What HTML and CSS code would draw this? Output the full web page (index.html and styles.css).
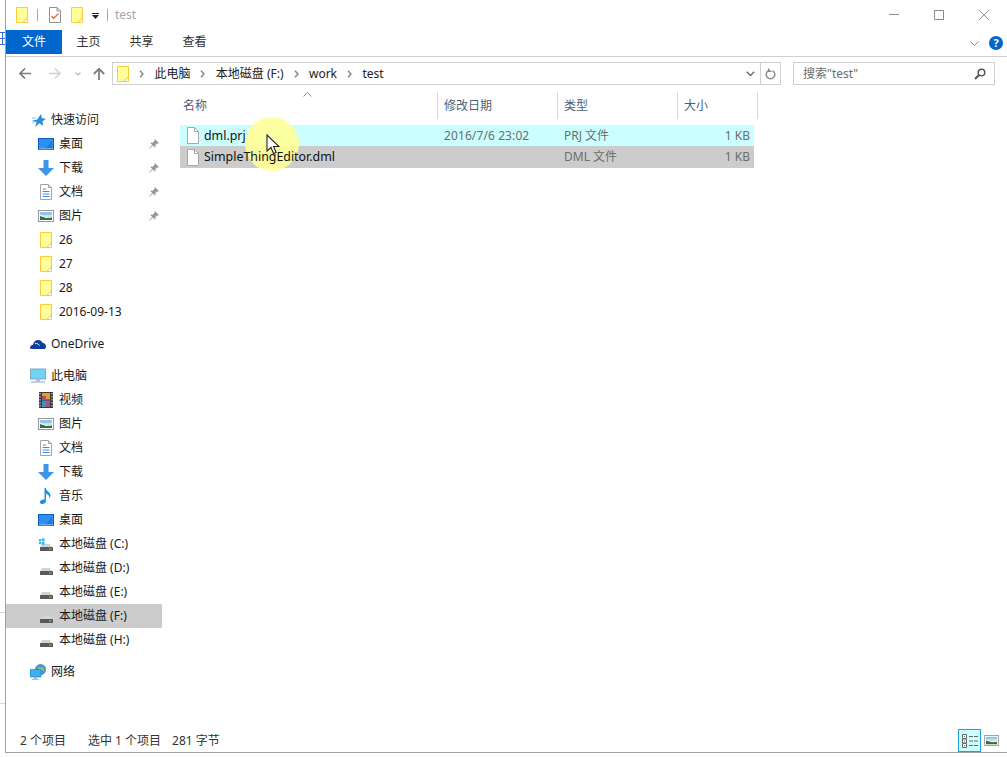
FILE: index.html
```html
<!DOCTYPE html>
<html lang="zh-CN">
<head>
<meta charset="utf-8">
<title>test</title>
<link rel="stylesheet" href="styles.css">
</head>
<body>
<svg class="defs" width="0" height="0" aria-hidden="true">
  <symbol id="note" viewBox="0 0 12 16"><path d="M.5.5h11v11l-4 4h-7z" fill="#ffff99"/><path d="M11.5 10v1.5l-4 4H6z" fill="#fbc77a"/><path d="M.5.5h11v15H.5z" fill="none" stroke="#ffc83d"/></symbol>
  <symbol id="file" viewBox="0 0 14 17"><path d="M1.5.5h7l4 4v12h-11z" fill="#fff" stroke="#a8a8a8"/><path d="M8.5.5v4h4" fill="none" stroke="#a8a8a8"/></symbol>
  <symbol id="desktop" viewBox="0 0 16 12"><rect width="16" height="12" fill="#0b5fc4"/><rect x="1" y="1" width="14" height="9" fill="#2f8ff0"/><path d="M8 10l6-7v7z" fill="#1f78dd"/><rect x="1" y="10.500" width="14" height=".7" fill="#dff"/></symbol>
  <symbol id="down" viewBox="0 0 16 16"><path d="M5.500 0h5v8H16l-8 8-8-8h5.500z" fill="#3d95e6"/></symbol>
  <symbol id="doc" viewBox="0 0 12 16"><path d="M.5.5h8l3 3v12H.5z" fill="#fff" stroke="#a3a3a3"/><path d="M3 5h3M2.500 7.500h7M2.500 10h7M2.500 12.500h7" stroke="#3f8fd8"/><path d="M8.500.5v3h3" fill="#ddd" stroke="#a3a3a3"/></symbol>
  <symbol id="pic" viewBox="0 0 16 12"><rect x=".5" y=".5" width="15" height="11" fill="#fff" stroke="#9a9a9a"/><rect x="2" y="2" width="12" height="3" fill="#8fc7ee"/><path d="M2 5h12v2l-7 0z" fill="#cfe7c9"/><path d="M2 6l6 2 6-.5V10H2z" fill="#3b6a4a"/></symbol>
  <symbol id="pin" viewBox="0 0 10 10"><path d="M6 0l4 4-1 .6-.7-.2L6.300 6.300 6.500 8 5.700 8.500 3.800 6.600.6 9.800 0 9.400 3.200 6 1.400 4.200 2 3.500l1.700.2L5.600 1.700 5.400 1z" fill="#9a9a9a"/></symbol>
  <symbol id="star" viewBox="0 0 14 13"><path d="M9 0l.8 4L14 5l-3.500 2.300.5 4.700-3.500-2.800L3 13l1.700-4.800L0 6.500l5-.8z" fill="#2c8fde"/><path d="M0 4h4M0 8h3" stroke="#7cc4f2"/></symbol>
  <symbol id="cloud" viewBox="0 0 16 10"><path d="M0 9.200C0 7 1.500 5.800 3 5.800 3.600 3 5.800 1 8.300 1c2 0 3.400 1 4.200 2.700C14.700 4 16 5.800 16 7.500c0 1-.4 1.700-1 2.500H1z" fill="#0f3f9c"/><path d="M5 4.700c2-.5 3.600.3 4.500 1.800" stroke="#fff" fill="none"/></symbol>
  <symbol id="pc" viewBox="0 0 16 15"><rect x=".5" y=".5" width="15" height="10" fill="#6fd3f6" stroke="#7ea8c4"/><path d="M6 11h4v2H6z" fill="#a9b6d2"/><path d="M1 13.500h14" stroke="#b0bbd6" stroke-width="1.400"/></symbol>
  <symbol id="film" viewBox="0 0 14 16"><rect width="14" height="16" fill="#3a3a3a"/><path d="M1 1v14M13 1v14" stroke="#ddd" stroke-dasharray="1.500 1.500"/><rect x="3" y="1" width="8" height="6.500" fill="#e0a030"/><rect x="3" y="8.500" width="8" height="6.500" fill="#3f8fc8"/><path d="M3 4h4v3.500H3zM7 10h4v5H7z" fill="#b04a7a"/></symbol>
  <symbol id="music" viewBox="0 0 12 16"><path d="M4.500 0h1.300c.3 3 4.200 3.800 4.700 7 .2 1.400-.4 2.500-1 3.200.2-2.300-1.500-3.800-3.500-4.400V13c0 2-2 3-3.700 3C.9 16 0 15.200 0 14.200 0 12.800 1.700 11.600 3.300 11.600c.5 0 .9.100 1.200.2z" fill="#1e8fe0"/></symbol>
  <symbol id="drive" viewBox="0 0 14 16"><path d="M3 8h8l2 3H1z" fill="#d4d4d4"/><rect x="1" y="11" width="13" height="4" rx=".5" fill="#5a5a5a"/><rect x="10" y="12.500" width="2.500" height="1" fill="#5fe07a"/></symbol>
  <symbol id="drive-sys" viewBox="0 0 14 16"><path d="M3 8h8l2 3H1z" fill="#d4d4d4"/><rect x="1" y="11" width="13" height="4" rx=".5" fill="#5a5a5a"/><rect x="10" y="12.500" width="2.500" height="1" fill="#5fe07a"/><path d="M0 3h2.300v2.300H0zM3 2.600h2.500v2.700H3zM0 6h2.300v2.300H0zM3 6h2.500v2.700H3z" fill="#2fb4f0"/></symbol>
  <symbol id="net" viewBox="0 0 16 16"><circle cx="10.500" cy="5.500" r="5.500" fill="#4d93c8"/><path d="M7 2c2 1 3 3 6 1l1 4c-2 0-3-1-4 2z" fill="#8cc88c"/><rect y="5.500" width="11" height="7.500" fill="#3fb0ee" stroke="#1d7dc2" stroke-width=".6"/><path d="M4 13h3v2H4z" fill="#a9b6d2"/><path d="M2 15.500h7" stroke="#b0bbd6"/></symbol>
  <symbol id="crumb" viewBox="0 0 5 8"><path d="M1 .8L4 4 1 7.200" fill="none" stroke="#8a8a8a" stroke-width="1.600"/></symbol>
</svg>

<div class="desktop-edge" aria-hidden="true">
  <svg class="edge-glyph" viewBox="0 0 5 13"><path d="M0 .5h5M0 6.500h5M0 12.500h5M2.500 0v13" stroke="#3a6fd0" fill="none"/></svg>
  <span class="edge-line edge-line-a"></span>
  <span class="edge-line edge-line-b"></span>
</div>

<div class="window">
  <header class="titlebar">
    <svg class="i-note"><use href="#note"/></svg>
    <span class="qa-sep"></span>
    <svg class="qa-check" viewBox="0 0 12 16"><path d="M.5.500h7.500l3.500 3.500v11.500H.5z" fill="#fff" stroke="#8f8f8f"/><path d="M8 .5V4h3.500" fill="none" stroke="#8f8f8f"/><path d="M2.500 9l2.200 2.300L9.500 6.500" fill="none" stroke="#e8662a" stroke-width="1.300"/></svg>
    <svg class="i-note qa-note2"><use href="#note"/></svg>
    <svg class="qa-drop" viewBox="0 0 7 6"><path d="M0 0h7v1H0zM0 2h7L3.500 6z" fill="#222"/></svg>
    <span class="qa-sep qa-sep2"></span>
    <span class="title-text">test</span>
    <div class="win-controls">
      <svg class="win-btn" viewBox="0 0 10 10"><path d="M0 4.500h10" stroke="#8a8a8a"/></svg>
      <svg class="win-btn" viewBox="0 0 10 10"><path d="M.5.500h9v9h-9z" fill="none" stroke="#8a8a8a"/></svg>
      <svg class="win-btn" viewBox="0 0 10 10"><path d="M0 0l10 10M10 0L0 10" stroke="#8a8a8a" stroke-width=".9"/></svg>
    </div>
  </header>

  <nav class="ribbon">
    <span class="tab tab-file">文件</span>
    <span class="tab">主页</span>
    <span class="tab">共享</span>
    <span class="tab">查看</span>
    <svg class="ribbon-chev" viewBox="0 0 9 5"><path d="M.5.500L4.500 4.500 8.500.5" fill="none" stroke="#8a8a8a"/></svg>
    <span class="help">?</span>
  </nav>

  <div class="addressrow">
    <svg class="nav nav-back" viewBox="0 0 12 11"><path d="M6 .5L1 5.500l5 5M1 5.500h11" fill="none" stroke="#7d7d7d" stroke-width="1.700"/></svg>
    <svg class="nav nav-fwd" viewBox="0 0 12 11"><path d="M6 .5l5 5-5 5M11 5.500H0" fill="none" stroke="#cfcfcf" stroke-width="1.300"/></svg>
    <svg class="nav nav-drop" viewBox="0 0 6 4"><path d="M.5.500L3 3 5.500.5" fill="none" stroke="#b5b5b5" stroke-width="1.200"/></svg>
    <svg class="nav nav-up" viewBox="0 0 12 12"><path d="M.8 6L6 .8 11.200 6M6 1v11" fill="none" stroke="#7d7d7d" stroke-width="1.800"/></svg>
    <div class="addressbar">
      <svg class="i-note addr-note"><use href="#note"/></svg>
      <svg class="crumb"><use href="#crumb"/></svg><span class="crumb-text">此电脑</span>
      <svg class="crumb"><use href="#crumb"/></svg><span class="crumb-text">本地磁盘 (F:)</span>
      <svg class="crumb"><use href="#crumb"/></svg><span class="crumb-text">work</span>
      <svg class="crumb"><use href="#crumb"/></svg><span class="crumb-text">test</span>
      <svg class="addr-drop" viewBox="0 0 9 6"><path d="M.8.800L4.500 4.500 8.200.8" fill="none" stroke="#6e6e6e" stroke-width="1.500"/></svg>
      <span class="addr-refresh">
        <svg viewBox="0 0 11 12"><path d="M7.500 2.600a4.300 4.300 0 1 1-4 0" fill="none" stroke="#8a8a8a" stroke-width="1.500"/><path d="M3 0v4h4z" fill="#8a8a8a"/></svg>
      </span>
    </div>
    <div class="searchbox">
      <span>搜索"test"</span>
      <svg viewBox="0 0 12 12"><circle cx="7.500" cy="4.500" r="3.300" fill="none" stroke="#555" stroke-width="1.500"/><path d="M5 7L1 11" stroke="#555" stroke-width="2"/></svg>
    </div>
  </div>

  <div class="body">
    <aside class="sidebar">
      <div class="group">
        <div class="row top"><svg class="ic ic-star"><use href="#star"/></svg><span>快速访问</span></div>
        <div class="row sub"><svg class="ic"><use href="#desktop"/></svg><span>桌面</span><svg class="pin"><use href="#pin"/></svg></div>
        <div class="row sub"><svg class="ic"><use href="#down"/></svg><span>下载</span><svg class="pin"><use href="#pin"/></svg></div>
        <div class="row sub"><svg class="ic"><use href="#doc"/></svg><span>文档</span><svg class="pin"><use href="#pin"/></svg></div>
        <div class="row sub"><svg class="ic"><use href="#pic"/></svg><span>图片</span><svg class="pin"><use href="#pin"/></svg></div>
        <div class="row sub"><svg class="ic"><use href="#note"/></svg><span>26</span></div>
        <div class="row sub"><svg class="ic"><use href="#note"/></svg><span>27</span></div>
        <div class="row sub"><svg class="ic"><use href="#note"/></svg><span>28</span></div>
        <div class="row sub"><svg class="ic"><use href="#note"/></svg><span>2016-09-13</span></div>
      </div>
      <div class="group">
        <div class="row top"><svg class="ic"><use href="#cloud"/></svg><span>OneDrive</span></div>
      </div>
      <div class="group">
        <div class="row top"><svg class="ic"><use href="#pc"/></svg><span>此电脑</span></div>
        <div class="row sub"><svg class="ic"><use href="#film"/></svg><span>视频</span></div>
        <div class="row sub"><svg class="ic"><use href="#pic"/></svg><span>图片</span></div>
        <div class="row sub"><svg class="ic"><use href="#doc"/></svg><span>文档</span></div>
        <div class="row sub"><svg class="ic"><use href="#down"/></svg><span>下载</span></div>
        <div class="row sub"><svg class="ic"><use href="#music"/></svg><span>音乐</span></div>
        <div class="row sub"><svg class="ic"><use href="#desktop"/></svg><span>桌面</span></div>
        <div class="row sub"><svg class="ic"><use href="#drive-sys"/></svg><span>本地磁盘 (C:)</span></div>
        <div class="row sub"><svg class="ic"><use href="#drive"/></svg><span>本地磁盘 (D:)</span></div>
        <div class="row sub"><svg class="ic"><use href="#drive"/></svg><span>本地磁盘 (E:)</span></div>
        <div class="row sub selected"><svg class="ic"><use href="#drive"/></svg><span>本地磁盘 (F:)</span></div>
        <div class="row sub"><svg class="ic"><use href="#drive"/></svg><span>本地磁盘 (H:)</span></div>
      </div>
      <div class="group">
        <div class="row top"><svg class="ic"><use href="#net"/></svg><span>网络</span></div>
      </div>
    </aside>

    <main class="files">
      <div class="head">
        <span class="col col-name">名称<svg class="sort" viewBox="0 0 9 5"><path d="M.5 4.500L4.500.5l4 4" fill="none" stroke="#8a8a8a"/></svg></span>
        <span class="col col-date">修改日期</span>
        <span class="col col-type">类型</span>
        <span class="col col-size">大小</span>
      </div>
      <div class="file file-hover">
        <span class="cell-name"><svg class="i-file"><use href="#file"/></svg><span class="file-label">dml.prj</span></span>
        <span class="cell cell-date">2016/7/6 23:02</span>
        <span class="cell cell-type">PRJ 文件</span>
        <span class="cell cell-size">1 KB</span>
      </div>
      <div class="file file-selected">
        <span class="cell-name"><svg class="i-file"><use href="#file"/></svg><span class="file-label">SimpleThingEditor.dml</span></span>
        <span class="cell cell-date"></span>
        <span class="cell cell-type">DML 文件</span>
        <span class="cell cell-size">1 KB</span>
      </div>
    </main>
  </div>

  <footer class="status">
    <span class="st-count">2 个项目</span>
    <span class="st-sel">选中 1 个项目</span>
    <span class="st-bytes">281 字节</span>
    <span class="view view-on">
      <svg viewBox="0 0 16 14"><path d="M.5.500h4v4h-4zM.5 5h4v4h-4zM.5 9.500h4v4h-4z" fill="#fff" stroke="#666"/><path d="M2 2h1v1H2zM2 6.500h1v1H2zM2 11h1v1H2z" fill="#666"/><path d="M7 2.500h4M12 2.500h4M7 7h4M12 7h4M7 11.500h4M12 11.500h4" stroke="#5f6b6b"/></svg>
    </span>
    <svg class="view-pic"><use href="#pic"/></svg>
  </footer>
</div>

<div class="spotlight" aria-hidden="true"></div>
<svg class="pointer" viewBox="0 0 14 21" aria-hidden="true"><path d="M1 1v16l4-3.500 2.500 6 2.600-1-2.500-6H13z" fill="#fff" stroke="#222" stroke-width="1.100"/></svg>
</body>
</html>
```
FILE: styles.css
```css
* { box-sizing: border-box; }
html, body { margin: 0; height: 757px; overflow: hidden; background: #fff; }
body {
  font: 12px/16px "Noto Sans", "Noto Sans CJK SC", sans-serif;
  color: #1a1a1a;
  position: relative;
}
.defs { position: absolute; }
svg { display: block; flex: none; }

.desktop-edge { position: absolute; left: 0; top: 0; width: 5px; height: 757px; }
.edge-glyph { position: absolute; left: 0; top: 32px; width: 5px; height: 13px; }
.edge-line { position: absolute; left: 0; width: 5px; height: 1px; background: #d8d8d8; }
.edge-line-a { top: 612px; }
.edge-line-b { top: 703px; }

.window {
  margin-left: 5px;
  height: 753px;
  border-left: 1px solid #a0a0a0;
  border-bottom: 1px solid #a0a0a0;
  display: flex;
  flex-direction: column;
  background: #fff;
}

.i-note { width: 12px; height: 16px; }

.titlebar { height: 30px; display: flex; align-items: center; padding-left: 10px; }
.qa-sep { width: 1px; height: 12px; background: #a8a8a8; margin-left: 9px; }
.qa-check { width: 12px; height: 16px; margin-left: 11px; }
.qa-note2 { margin-left: 10px; }
.qa-drop { width: 7px; height: 6px; margin-left: 9px; margin-top: 2px; }
.qa-sep2 { margin-left: 8px; }
.title-text { margin-left: 7px; color: #a6a6a6; }
.win-controls { margin-left: auto; display: flex; gap: 35px; padding-right: 18px; }
.win-btn { width: 10px; height: 10px; }

.ribbon { height: 27px; display: flex; align-items: flex-start; border-bottom: 1px solid #d0d0d0; }
.tab { width: 53px; height: 24px; display: flex; align-items: center; justify-content: center; color: #333; }
.tab-file { width: 56px; background: #0066cc; color: #fff; }
.ribbon-chev { width: 9px; height: 5px; margin: 11px 0 0 auto; }
.help {
  width: 14px; height: 14px; margin: 6px 4px 0 10px; border-radius: 50%;
  background: #0066cc; color: #fff; font-size: 11px; font-weight: 700; line-height: 14px; text-align: center;
}

.addressrow { height: 35px; display: flex; align-items: center; padding-bottom: 2px; }
.nav { flex: none; }
.nav-back { width: 12px; height: 11px; margin-left: 13px; }
.nav-fwd { width: 12px; height: 11px; margin-left: 18px; }
.nav-drop { width: 6px; height: 4px; margin-left: 14px; }
.nav-up { width: 12px; height: 12px; margin-left: 12px; }
.addressbar {
  width: 669px; height: 23px; margin-left: 7px;
  border: 1px solid #d0d0d0;
  display: flex; align-items: center;
  padding-left: 4px;
}
.crumb { width: 5px; height: 8px; margin-left: 10px; }
.crumb-text { margin-left: 10.400px; color: #222; }
.addr-drop { width: 9px; height: 6px; margin-left: auto; margin-right: 5px; }
.addr-refresh { width: 20px; height: 21px; border-left: 1px solid #d0d0d0; display: flex; align-items: center; justify-content: center; }
.addr-refresh svg { width: 11px; height: 12px; }
.searchbox {
  width: 202px; height: 23px; margin-left: 12px;
  border: 1px solid #d0d0d0;
  display: flex; align-items: center; justify-content: space-between;
  padding: 0 8px 0 9px; color: #6d6d6d;
}
.searchbox svg { width: 12px; height: 12px; }

.body { flex: 1; display: flex; min-height: 0; }

.sidebar { width: 156px; padding-top: 16px; flex: none; }
.group { margin-bottom: 8px; }
.row { height: 24px; display: flex; align-items: center; position: relative; white-space: nowrap; color: #1a1a1a; }
.row.top { padding-left: 24px; }
.row.sub { padding-left: 32px; }
.row .ic { width: 16px; height: 16px; margin-right: 5px; }
.row .ic-star { width: 14px; height: 13px; margin-left: 2px; margin-right: 5px; }
.row.selected { background: #cccccc; }
.pin { width: 10px; height: 10px; position: absolute; left: 143px; top: 7px; }

.files { flex: 1; padding-left: 18px; }
.head { height: 27px; display: flex; }
.col { height: 27px; border-right: 1px solid #d6d6d6; display: flex; align-items: center; padding-left: 6px; color: #4c607a; position: relative; }
.col-name { width: 258px; padding-left: 3px; }
.col-date, .col-type { width: 120px; }
.col-size { width: 80px; }
.sort { width: 9px; height: 5px; position: absolute; left: 123px; top: 0; }

.file { width: 574px; display: flex; align-items: center; height: 21px; }
.file-hover { background: #cbffff; margin-top: 6px; }
.file-selected { background: #cccccc; height: 22px; }
.cell-name { width: 258px; display: flex; align-items: center; gap: 4px; padding-left: 6px; color: #111; font-size: 12.400px; }
.file-label { position: relative; z-index: 2; }
.i-file { width: 14px; height: 17px; }
.cell { color: #6d6d6d; }
.cell-date { width: 120px; padding-left: 6px; letter-spacing: .1px; }
.cell-type { width: 120px; padding-left: 6px; }
.cell-size { width: 76px; text-align: right; padding-right: 4px; }

.status { height: 27px; display: flex; align-items: center; padding: 4px 0 0 14px; color: #333; flex: none; }
.st-sel { margin-left: 22px; }
.st-bytes { margin-left: 11px; }
.view { margin-left: auto; width: 23px; height: 23px; border: 1px solid #26a0da; background: #cbffff; display: flex; align-items: center; justify-content: center; margin-right: 3px; }
.view svg { width: 16px; height: 14px; }
.view-pic { width: 15px; height: 11px; margin-right: 8px; }

.spotlight {
  position: absolute; left: 245px; top: 117px; width: 54px; height: 54px; border-radius: 50%;
  background: #ffff99; opacity: .92; z-index: 1;
}
.pointer { position: absolute; left: 266px; top: 134px; width: 14px; height: 21px; z-index: 3; }
```
